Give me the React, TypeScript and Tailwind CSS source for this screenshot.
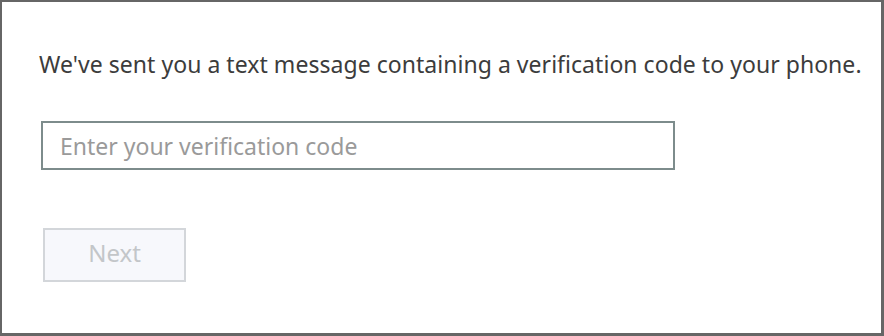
export default function App() {
  return (
    <div className="w-[884px] h-[336px] bg-white border-l-2 border-t-2 border-r-[3px] border-b-[3px] border-[#666666] font-['Noto_Sans',sans-serif]">
      <div className="pl-[37px] pt-[47px]">
        <p className="text-[23px] leading-[30px] text-[#3c3c3c] tracking-[0.04px]">
          We've sent you a text message containing a verification code to your phone.
        </p>
        <input
          type="text"
          placeholder="Enter your verification code"
          className="mt-[42px] ml-[2px] block w-[634px] h-[49px] border-2 border-[#7d8c8c] pl-[17px] pr-3 text-[23px] text-[#333] placeholder:text-[#9a9a9a] outline-none"
        />
        <button
          disabled
          className="mt-[58px] ml-[4px] w-[143px] h-[54px] border-2 border-[#d3d6da] bg-[#f7f8fc] pb-[5px] text-[24px] text-[#c3c6c9]"
        >
          Next
        </button>
      </div>
    </div>
  )
}
